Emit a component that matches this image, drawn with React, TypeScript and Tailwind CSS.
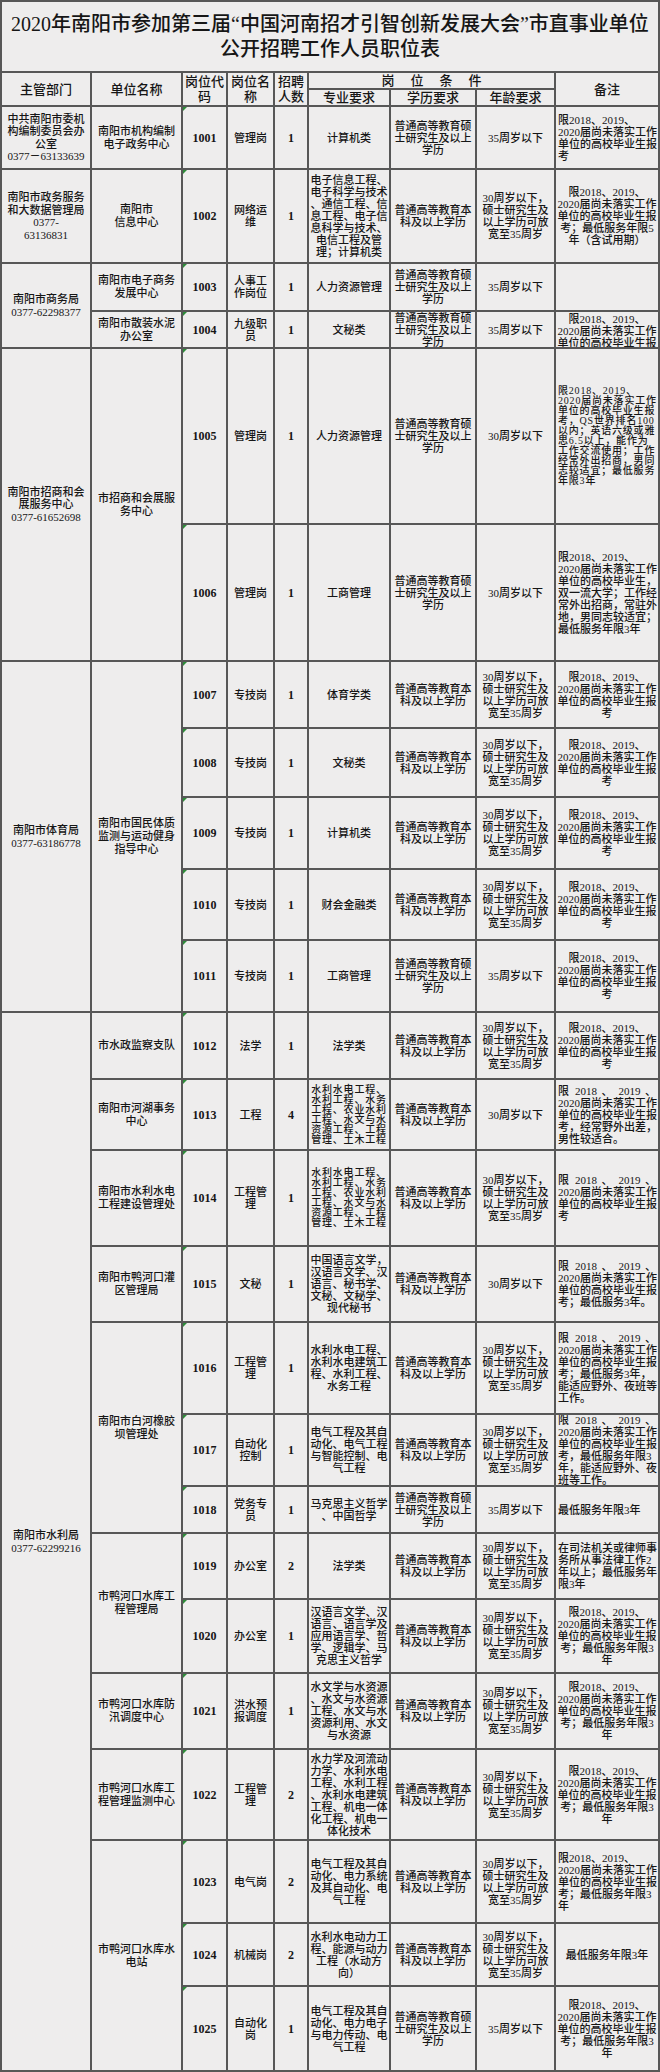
import React from 'react';

type Span = { t: string; n: number };
type Row = {
  dept?: Span;
  unit?: Span;
  code: string;
  name: string;
  num: string;
  major: string;
  edu: string;
  age: string;
  note: string;
  noteLeft?: boolean;
  majorTight?: boolean;
  noteTight?: boolean;
  noteTop?: boolean;
};

const EDU_M = '普通高等教育硕\n士研究生及以上\n学历';
const EDU_B = '普通高等教育本\n科及以上学历';
const AGE_30X = '30周岁以下，\n硕士研究生及\n以上学历可放\n宽至35周岁';
const NOTE_A = '限2018、2019、\n2020届尚未落实工作\n单位的高校毕业生报\n考';
const NOTE_B = '限2018、2019、\n2020届尚未落实工作\n单位的高校毕业生报\n考；最低服务年限3\n年';
const NOTE_S = '限 2018 、 2019 、\n2020届尚未落实工作\n单位的高校毕业生报\n';
const WATER = '水利水电工程、\n水利工程、水务\n工程、农业水利\n工程、水文与水\n资源工程、工程\n管理、土木工程';

const rows: Row[] = [
  {
    dept: { t: '中共南阳市委机\n构编制委员会办\n公室\n0377－63133639', n: 1 },
    unit: { t: '南阳市机构编制\n电子政务中心', n: 1 },
    code: '1001', name: '管理岗', num: '1', major: '计算机类', edu: EDU_M, age: '35周岁以下', note: NOTE_A, noteLeft: true,
  },
  {
    dept: { t: '南阳市政务服务\n和大数据管理局\n0377-\n63136831', n: 1 },
    unit: { t: '南阳市\n信息中心', n: 1 },
    code: '1002', name: '网络运\n维', num: '1',
    major: '电子信息工程、\n电子科学与技术\n、通信工程、信\n息工程、电子信\n息科学与技术、\n电信工程及管\n理；计算机类',
    edu: EDU_B, age: AGE_30X,
    note: '限2018、2019、\n2020届尚未落实工作\n单位的高校毕业生报\n考；最低服务年限5\n年（含试用期）',
  },
  {
    dept: { t: '南阳市商务局\n0377-62298377', n: 2 },
    unit: { t: '南阳市电子商务\n发展中心', n: 1 },
    code: '1003', name: '人事工\n作岗位', num: '1', major: '人力资源管理', edu: EDU_M, age: '35周岁以下', note: '',
  },
  {
    unit: { t: '南阳市散装水泥\n办公室', n: 1 },
    code: '1004', name: '九级职\n员', num: '1', major: '文秘类', edu: EDU_M, age: '35周岁以下', note: NOTE_A, noteTop: true,
  },
  {
    dept: { t: '南阳市招商和会\n展服务中心\n0377-61652698', n: 2 },
    unit: { t: '市招商和会展服\n务中心', n: 2 },
    code: '1005', name: '管理岗', num: '1', major: '人力资源管理', edu: EDU_M, age: '30周岁以下',
    note: '限2018、2019、\n2020届尚未落实工作\n单位的高校毕业生报\n考，QS世界排名100\n以内；英语六级或雅\n思6.5以上，能作为\n工作交流使用；工作\n经常外出招商，男同\n志较适宜；最低服务\n年限3年',
    noteLeft: true, noteTight: true,
  },
  {
    code: '1006', name: '管理岗', num: '1', major: '工商管理', edu: EDU_M, age: '30周岁以下',
    note: '限2018、2019、\n2020届尚未落实工作\n单位的高校毕业生，\n双一流大学；工作经\n常外出招商，常驻外\n地，男同志较适宜；\n最低服务年限3年',
    noteLeft: true,
  },
  {
    dept: { t: '南阳市体育局\n0377-63186778', n: 5 },
    unit: { t: '南阳市国民体质\n监测与运动健身\n指导中心', n: 5 },
    code: '1007', name: '专技岗', num: '1', major: '体育学类', edu: EDU_B, age: AGE_30X, note: NOTE_A,
  },
  { code: '1008', name: '专技岗', num: '1', major: '文秘类', edu: EDU_B, age: AGE_30X, note: NOTE_A },
  { code: '1009', name: '专技岗', num: '1', major: '计算机类', edu: EDU_B, age: AGE_30X, note: NOTE_A },
  { code: '1010', name: '专技岗', num: '1', major: '财会金融类', edu: EDU_B, age: AGE_30X, note: NOTE_A },
  { code: '1011', name: '专技岗', num: '1', major: '工商管理', edu: EDU_M, age: '35周岁以下', note: NOTE_A },
  {
    dept: { t: '南阳市水利局\n0377-62299216', n: 14 },
    unit: { t: '市水政监察支队', n: 1 },
    code: '1012', name: '法学', num: '1', major: '法学类', edu: EDU_B, age: AGE_30X, note: NOTE_A,
  },
  {
    unit: { t: '南阳市河湖事务\n中心', n: 1 },
    code: '1013', name: '工程', num: '4', major: WATER, majorTight: true, edu: EDU_B, age: '30周岁以下',
    note: NOTE_S + '考，经常野外出差，\n男性较适合。', noteLeft: true,
  },
  {
    unit: { t: '南阳市水利水电\n工程建设管理处', n: 1 },
    code: '1014', name: '工程管\n理', num: '1', major: WATER, majorTight: true, edu: EDU_B, age: AGE_30X,
    note: NOTE_S + '考', noteLeft: true,
  },
  {
    unit: { t: '南阳市鸭河口灌\n区管理局', n: 1 },
    code: '1015', name: '文秘', num: '1',
    major: '中国语言文学，\n汉语言文学、汉\n语言、秘书学、\n文秘、文秘学、\n现代秘书',
    edu: EDU_B, age: '30周岁以下', note: NOTE_S + '考；最低服务3年。', noteLeft: true,
  },
  {
    unit: { t: '南阳市白河橡胶\n坝管理处', n: 3 },
    code: '1016', name: '工程管\n理', num: '1',
    major: '水利水电工程、\n水利水电建筑工\n程、水利工程、\n水务工程',
    edu: EDU_B, age: AGE_30X, note: NOTE_S + '考；最低服务3年，\n能适应野外、夜班等\n工作。', noteLeft: true,
  },
  {
    code: '1017', name: '自动化\n控制', num: '1',
    major: '电气工程及其自\n动化、电气工程\n与智能控制、电\n气工程',
    edu: EDU_B, age: AGE_30X, note: NOTE_S + '考，最低服务年限3\n年，能适应野外、夜\n班等工作。', noteLeft: true,
  },
  {
    code: '1018', name: '党务专\n员', num: '1', major: '马克思主义哲学\n、中国哲学', edu: EDU_M, age: '35周岁以下',
    note: '最低服务年限3年', noteLeft: true,
  },
  {
    unit: { t: '市鸭河口水库工\n程管理局', n: 2 },
    code: '1019', name: '办公室', num: '2', major: '法学类', edu: EDU_B, age: AGE_30X,
    note: '在司法机关或律师事\n务所从事法律工作2\n年以上；最低服务年\n限3年', noteLeft: true,
  },
  {
    code: '1020', name: '办公室', num: '1',
    major: '汉语言文学、汉\n语言、语言学及\n应用语言学、哲\n学、逻辑学、马\n克思主义哲学',
    edu: EDU_B, age: AGE_30X, note: NOTE_B,
  },
  {
    unit: { t: '市鸭河口水库防\n汛调度中心', n: 1 },
    code: '1021', name: '洪水预\n报调度', num: '1',
    major: '水文学与水资源\n、水文与水资源\n工程、水文与水\n资源利用、水文\n与水资源',
    edu: EDU_B, age: AGE_30X, note: NOTE_B,
  },
  {
    unit: { t: '市鸭河口水库工\n程管理监测中心', n: 1 },
    code: '1022', name: '工程管\n理', num: '2',
    major: '水力学及河流动\n力学、水利水电\n工程、水利工程\n、水利水电建筑\n工程、机电一体\n化工程、机电一\n体化技术',
    edu: EDU_B, age: AGE_30X, note: NOTE_B,
  },
  {
    unit: { t: '市鸭河口水库水\n电站', n: 3 },
    code: '1023', name: '电气岗', num: '2',
    major: '电气工程及其自\n动化、电力系统\n及其自动化、电\n气工程',
    edu: EDU_B, age: AGE_30X, note: NOTE_B, noteLeft: true,
  },
  {
    code: '1024', name: '机械岗', num: '2',
    major: '水利水电动力工\n程、能源与动力\n工程（水动方\n向）',
    edu: EDU_B, age: AGE_30X, note: '最低服务年限3年',
  },
  {
    code: '1025', name: '自动化\n岗', num: '1',
    major: '电气工程及其自\n动化、电力电子\n与电力传动、电\n气工程',
    edu: EDU_M, age: '35周岁以下', note: NOTE_B,
  },
];

// spans need full class names
const spanCls: Record<number, string> = {
  1: '',
  2: 'row-span-2',
  3: 'row-span-3',
  5: 'row-span-5',
  14: 'row-span-14',
};

const NORMAL = 'text-[11px] leading-[12px]';
const TIGHT = 'text-[10px] leading-[10px] tracking-[0.8px]';

function Cell({
  text,
  left = false,
  top = false,
  extra = '',
  size = NORMAL,
  mark = false,
}: {
  text: string;
  left?: boolean;
  top?: boolean;
  extra?: string;
  size?: string;
  mark?: boolean;
}) {
  return (
    <div
      className={`relative flex overflow-hidden bg-[#eeeded] ${top ? 'items-start pt-[1px]' : 'items-center'} ${size} ${
        left ? 'justify-start px-[2px] text-left' : 'justify-center text-center'
      } ${extra}`}
    >
      {mark && (
        <span className="absolute left-0 top-0 h-0 w-0 border-t-[4px] border-r-[4px] border-t-[#2e8b3a] border-r-transparent" />
      )}
      <div className="w-full">
        {text.split('\n').map((l, i) => (
          <div
            key={i}
            className={`whitespace-nowrap ${l.startsWith('限 ') ? '[text-align-last:justify]' : ''}`}
          >
            {l}
          </div>
        ))}
      </div>
    </div>
  );
}

function Head({ text, extra = '' }: { text: string; extra?: string }) {
  return (
    <div
      className={`flex items-center justify-center overflow-hidden bg-[#eeeded] text-center text-[13px] leading-[15px] ${extra}`}
    >
      <div>
        {text.split('\n').map((l, i) => (
          <div key={i} className="whitespace-nowrap">
            {l}
          </div>
        ))}
      </div>
    </div>
  );
}

export default function App() {
  return (
    <div className="w-[660px] bg-[#eeeded] font-['Liberation_Serif','Noto_Sans_CJK_SC',serif] font-medium text-[#161616]">
      <div className="grid grid-cols-[88px_89px_43px_45px_32px_80px_84px_77px_102px] grid-rows-[69px_15px_15px_61px_92px_46px_35px_174px_135px_65px_67px_70px_69px_70px_65px_69px_94px_74px_90px_70px_45px_64px_72px_74px_89px_81px_61px_83px] gap-[2px] bg-[#575757] p-[2px]">
        <div className="col-span-9 flex flex-col items-center justify-center bg-[#eeeded] text-[20px] leading-[25px]">
          <div className="whitespace-nowrap">2020年南阳市参加第三届“中国河南招才引智创新发展大会”市直事业单位</div>
          <div className="whitespace-nowrap">公开招聘工作人员职位表</div>
        </div>

        <Head text="主管部门" extra="row-span-2" />
        <Head text="单位名称" extra="row-span-2" />
        <Head text={'岗位代\n码'} extra="row-span-2" />
        <Head text={'岗位名\n称'} extra="row-span-2" />
        <Head text={'招聘\n人数'} extra="row-span-2" />
        <div className="col-span-3 flex items-center justify-center bg-[#eeeded] text-[13px] leading-[15px]">
          <span className="pl-[16px] tracking-[16px]">岗位条件</span>
        </div>
        <Head text="备注" extra="row-span-2" />
        <Head text="专业要求" />
        <Head text="学历要求" />
        <Head text="年龄要求" />

        {rows.map((r) => (
          <React.Fragment key={r.code}>
            {r.dept && <Cell text={r.dept.t} extra={spanCls[r.dept.n]} size="text-[11px] leading-[12.5px]" />}
            {r.unit && <Cell text={r.unit.t} extra={spanCls[r.unit.n]} size="text-[11px] leading-[13px]" />}
            <Cell text={r.code} mark size="text-[12px] leading-[12px] font-bold" />
            <Cell text={r.name} />
            <Cell text={r.num} size="text-[12px] leading-[12px] font-bold" />
            <Cell text={r.major} size={r.majorTight ? TIGHT : NORMAL} />
            <Cell text={r.edu} />
            <Cell text={r.age} />
            <Cell
              text={r.note}
              left={r.noteLeft}
              top={r.noteTop}
              size={r.noteTight ? TIGHT : NORMAL}
            />
          </React.Fragment>
        ))}
      </div>
    </div>
  );
}
